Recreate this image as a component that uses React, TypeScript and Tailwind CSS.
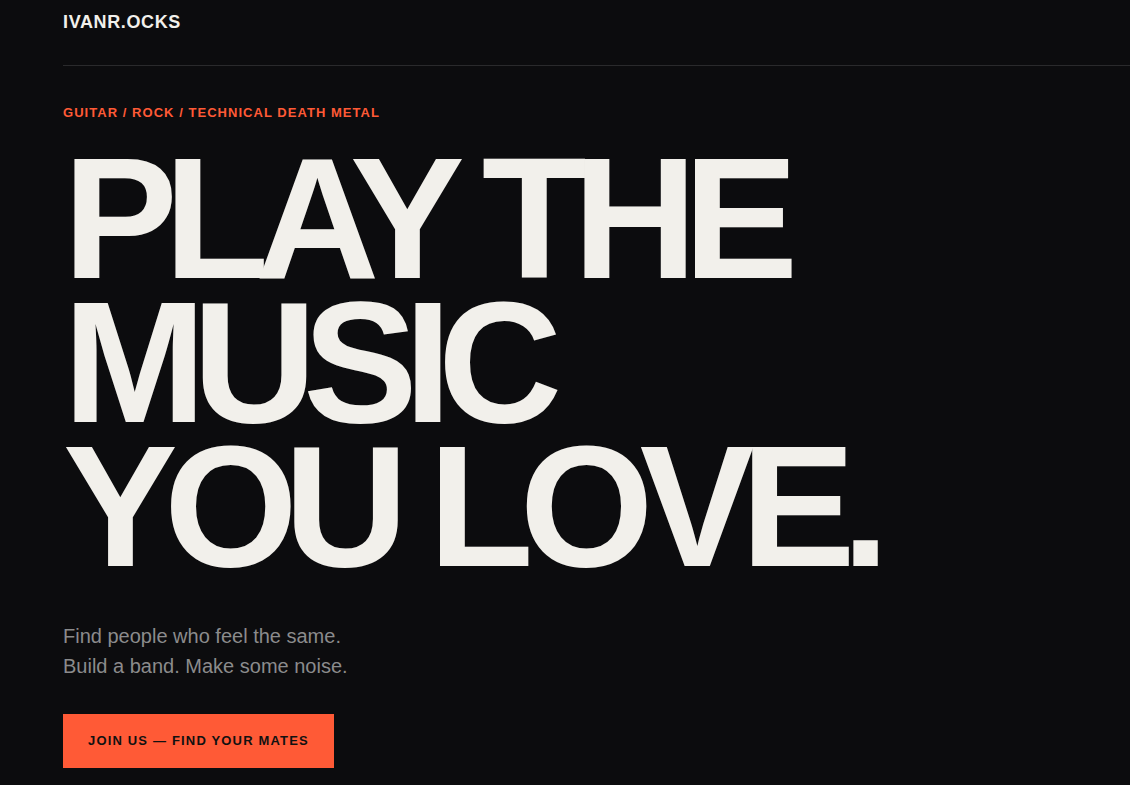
export default function App() {
  return (
    <div className="min-h-screen bg-[#0c0c0e] pl-[63px] font-['Liberation_Sans',Arial,sans-serif] text-[#f2f0eb]">
      {/* header */}
      <header className="flex h-[66px] items-start border-b border-[#2a2a2c] pt-[8px]">
        <a href="#" className="text-[18px] font-bold leading-[28px] tracking-[0.035em] text-[#f2f0eb]">
          IVANR.OCKS
        </a>
      </header>

      {/* hero */}
      <main className="pb-10">
        <p className="mt-[39px] text-[13px] font-bold leading-[16px] tracking-[0.08em] text-[#ff5a36]">
          GUITAR / ROCK / TECHNICAL DEATH METAL
        </p>

        <h1 className="mt-[25px] text-[172px] font-bold leading-[144px] tracking-[-0.08em] text-[#f2f0eb]">
          PLAY THE
          <br />
          MUSIC
          <br />
          YOU LOVE.
        </h1>

        <p className="mt-[43px] text-[20px] leading-[30px] text-[#8b8b8c]">
          Find people who feel the same.
          <br />
          Build a band. Make some noise.
        </p>

        <button
          type="button"
          className="mt-[33px] flex h-[54px] items-center bg-[#ff5a36] px-[25px] text-[13px] font-bold tracking-[0.09em] text-[#111111]"
        >
          JOIN US — FIND YOUR MATES
        </button>
      </main>
    </div>
  );
}
